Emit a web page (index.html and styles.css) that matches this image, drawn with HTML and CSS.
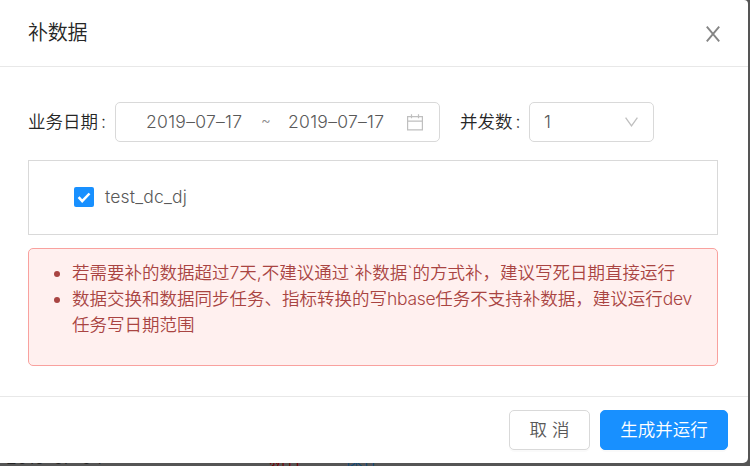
FILE: index.html
```html
<!DOCTYPE html>
<html lang="zh-CN">
<head>
<meta charset="utf-8">
<title>补数据</title>
<link rel="stylesheet" href="styles.css">
</head>
<body>
<div class="backdrop"><span class="b-date">2019-07-04</span><span class="b-red">新停</span><span class="b-blue">操作</span></div>
<section class="modal">
  <header class="modal-header">
    <h1>补数据</h1>
    <svg class="close" viewBox="0 0 14 16" width="14" height="16"><path d="M.8.7 13.2 15.3M13.2.7.8 15.3" fill="none" stroke="#858585" stroke-width="1.9"/></svg>
  </header>
  <div class="modal-body">
    <div class="form-row">
      <span class="label label-date">业务日期<span class="colon">:</span></span>
      <div class="range">
        <span class="date">2019–07–17</span><span class="tilde">~</span><span class="date">2019–07–17</span>
        <svg class="calendar" viewBox="0 0 16 17" width="16" height="17"><path d="M.6 2.6h14.8v13.3H.6zM.6 7.2h14.8M4.5.3v4M11.5.3v4" fill="none" stroke="#bfbfbf" stroke-width="1.2"/></svg>
      </div>
      <span class="label label-count">并发数<span class="colon">:</span></span>
      <div class="select"><span>1</span>
        <svg viewBox="0 0 13 10" width="13" height="10"><path d="M.6.6 6.5 8.8 12.4.6" fill="none" stroke="#bfbfbf" stroke-width="1.3"/></svg>
      </div>
    </div>
    <div class="tasks">
      <span class="checkbox"><svg viewBox="0 0 20 20" width="20" height="20"><path d="m4.6 10.2 3.6 4 7.3-7.7" fill="none" stroke="#fff" stroke-width="2.5"/></svg></span>
      <span class="task-name">test_dc_dj</span>
    </div>
    <ul class="alert">
      <li>若需要补的数据超过7天,不建议通过`补数据`的方式补，建议写死日期直接运行</li>
      <li>数据交换和数据同步任务、指标转换的写<span class="latin">hbase</span>任务不支持补数据，建议运行<span class="latin">dev</span><br>任务写日期范围</li>
    </ul>
  </div>
  <footer class="modal-footer">
    <button class="btn cancel">取 消</button>
    <button class="btn primary">生成并运行</button>
  </footer>
</section>
</body>
</html>
```
FILE: styles.css
```css
* { box-sizing: border-box; }
body {
  margin: 0;
  width: 750px;
  height: 466px;
  overflow: hidden;
  position: relative;
  background: #555;
  font: 17.5px/26px Inter, "Noto Sans CJK SC", sans-serif;
  font-weight: 350;
  color: #595959;
}
.backdrop { position: absolute; left: 6px; top: 446px; display: flex; line-height: 26px; color: #222; white-space: nowrap; }
.b-date { width: 263px; line-height: 24px; }
.b-red { width: 76px; color: #700; }
.b-blue { color: #124a78; }
.modal {
  position: relative;
  width: 748px;
  height: 463px;
  background: #fff;
  border-radius: 0 4px 5px 0;
  display: flex;
  flex-direction: column;
}
.modal-header {
  height: 67px;
  padding: 0 28px;
  border-bottom: 1px solid #e8e8e8;
  display: flex;
  align-items: center;
  justify-content: space-between;
}
h1 { margin: 0 0 1px; font-size: 20px; line-height: 28px; font-weight: 350; letter-spacing: -.2px; color: #262626; }
.close { margin-top: 2px; }
.modal-body { flex: 1; padding: 35px 30px 0 28px; }
.form-row { display: flex; align-items: center; height: 40px; }
.label { color: #262626; white-space: nowrap; }
.label-date { width: 87px; }
.label-count { width: 69px; margin-left: 20px; }
.colon { margin-left: 3px; }
.range, .select { height: 40px; border: 1px solid #d9d9d9; border-radius: 5px; display: flex; align-items: center; }
.range { width: 325px; padding-left: 30px; }
.date { width: 98px; white-space: nowrap; letter-spacing: .3px; }
.tilde { width: 44px; text-align: center; font-size: 15px; line-height: 22px; margin-bottom: 3px; color: #8c8c8c; }
.calendar { margin-left: 21px; }
.select { width: 125px; padding: 0 15px 0 14px; justify-content: space-between; }
.tasks { height: 75px; margin-top: 18px; border: 1px solid #d9d9d9; padding: 0 0 2px 45px; display: flex; align-items: center; }
.checkbox { width: 20px; height: 20px; border-radius: 2px; background: #1890ff; }
.checkbox svg { display: block; }
.task-name { margin-left: 11px; letter-spacing: .2px; }
.alert { margin: 13px 0 0; height: 118px; padding: 11px 0 0 43px; background: #fff0ef; border: 1px solid #f9a19e; border-radius: 5px; color: #a94442; white-space: nowrap; }
.latin { letter-spacing: -.3px; }
.modal-footer { height: 67px; border-top: 1px solid #e8e8e8; padding: 13px 20px 0 0; display: flex; justify-content: flex-end; gap: 10px; }
.btn { height: 40px; padding: 0; border: 1px solid #d9d9d9; border-radius: 5px; background: #fff; font: inherit; color: #595959; box-shadow: 0 2px 0 rgba(0, 0, 0, .02); white-space: nowrap; }
.cancel { width: 81px; }
.primary { width: 128px; background: #1890ff; border-color: #1890ff; color: #fff; }
```
